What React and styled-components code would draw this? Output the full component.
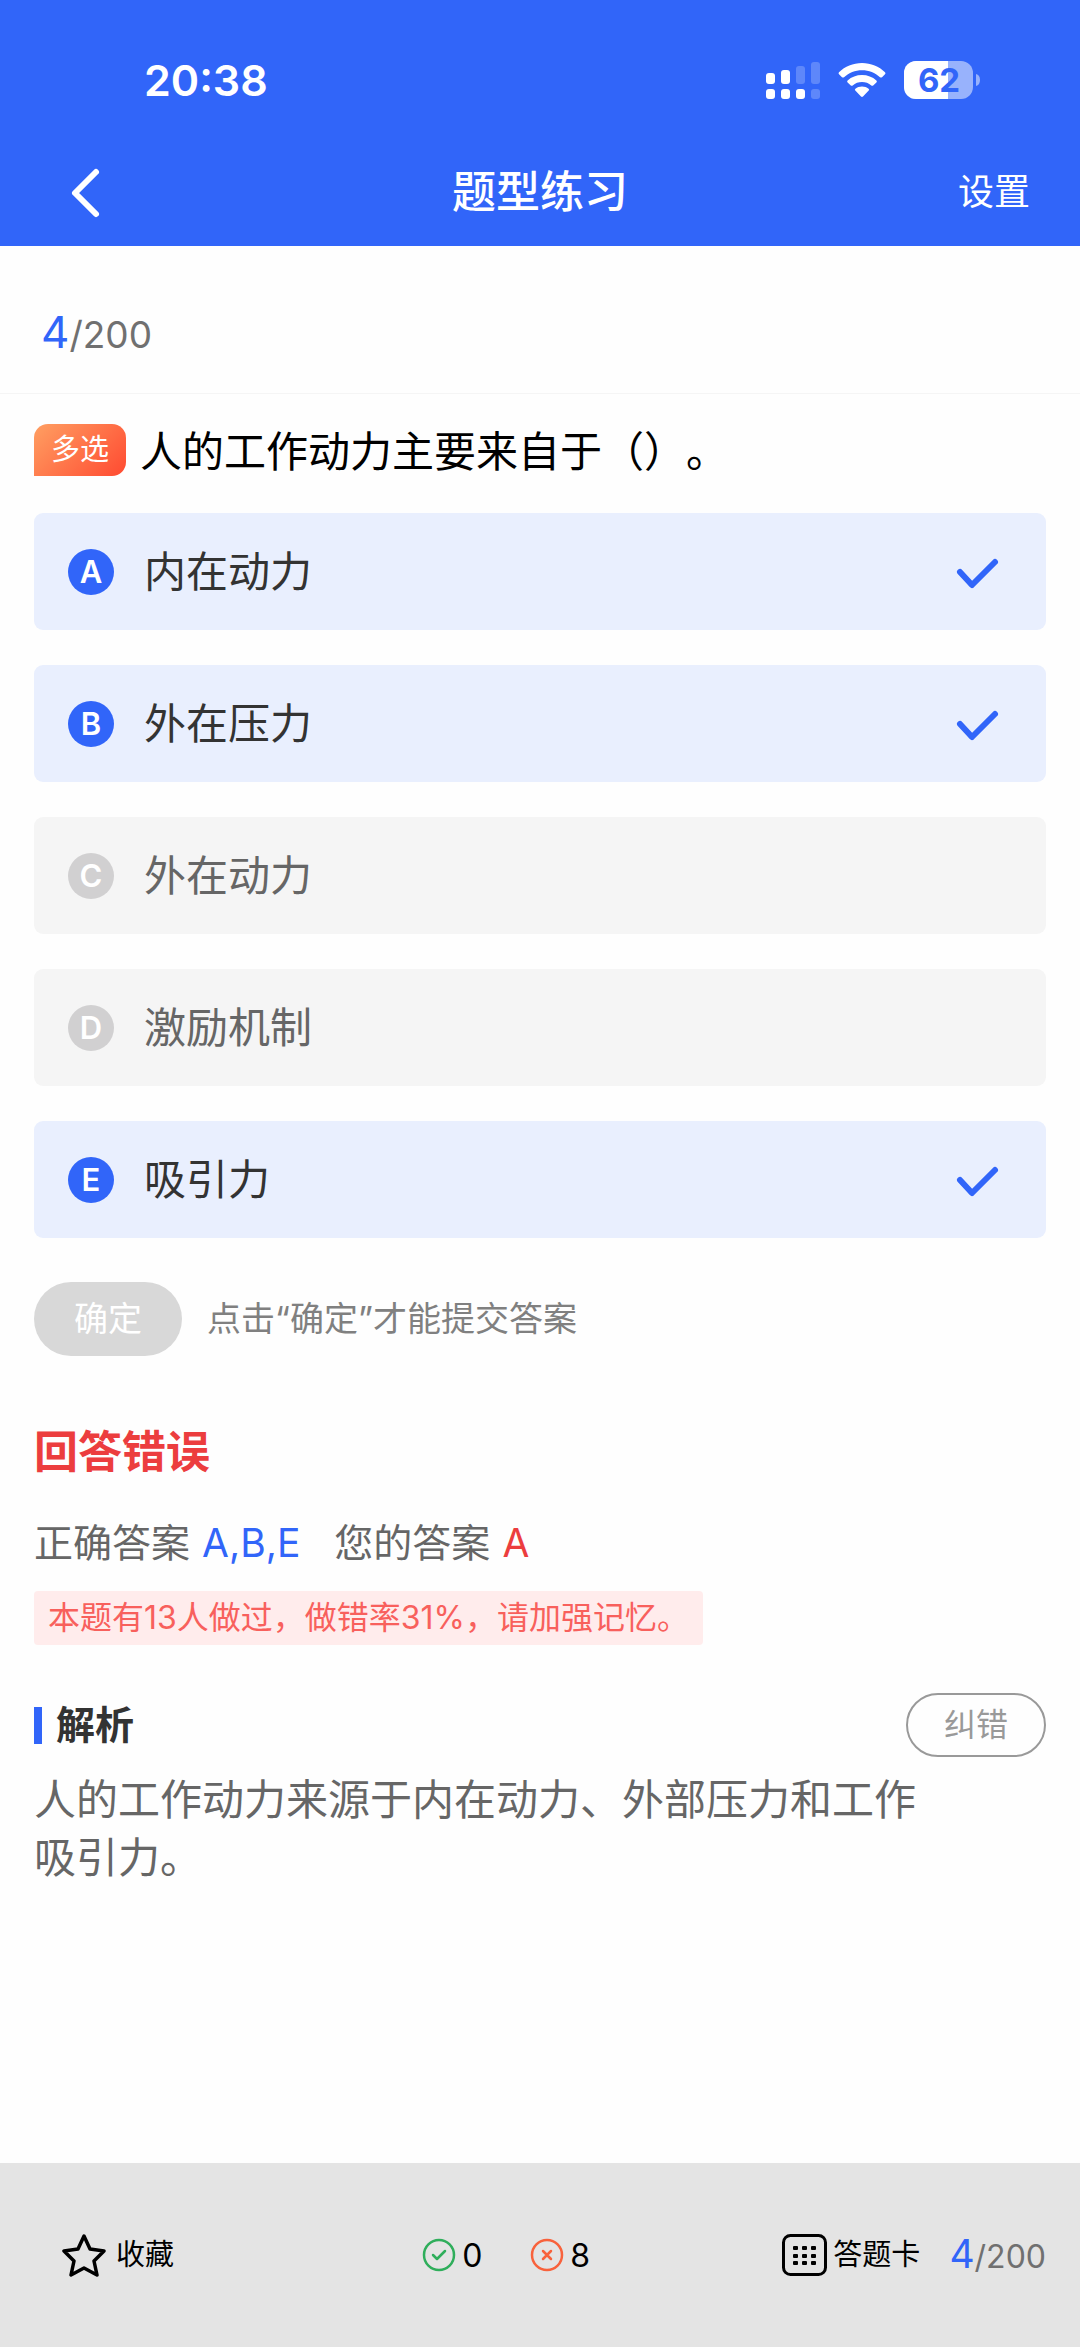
import { useState } from "react";
import styled, { createGlobalStyle } from "styled-components";

const GlobalStyle = createGlobalStyle`
    * {
        box-sizing: border-box;
    }
    body {
        margin: 0;
        background-color: #fefefe;
        font-family: Inter, "Noto Sans CJK SC", sans-serif;
        text-spacing-trim: space-all;
    }
    h1, h2, p {
        margin: 0;
        font-weight: 400;
    }
    button {
        padding: 0;
        border: none;
        background: none;
        font-family: inherit;
        color: inherit;
        cursor: pointer;
    }
    svg {
        display: block;
    }
`

const Page = styled.div`
    display: flex;
    flex-direction: column;
    min-height: 100vh;
`

const Header = styled.header`
    background-color: #3165f9;
    color: white;
`

const StatusBar = styled.div`
    display: flex;
    align-items: center;
    justify-content: space-between;
    height: 138px;
    padding: 22px 100px 0 144px;
`

const Clock = styled.time`
    font-size: 43px;
    font-weight: 600;
`

const StatusIcons = styled.div`
    display: flex;
    align-items: center;
    gap: 18px;
`

const NavBar = styled.nav`
    display: grid;
    grid-template-columns: 1fr auto 1fr;
    align-items: center;
    height: 108px;
    padding: 0 50px;
`

const BackButton = styled.button`
    justify-self: start;
`

const NavTitle = styled.h1`
    font-size: 44px;
    font-weight: 500;
    line-height: 58px;
`

const SettingsButton = styled.button`
    justify-self: end;
    font-size: 36px;
    line-height: 58px;
`

const ProgressRow = styled.div`
    height: 148px;
    padding: 50px 41px 0;
    border-bottom: 1px solid #f5f5f5;
`

const Progress = styled.p`
    font-size: ${({ $small }) => $small ? '32px' : '37px'};
    line-height: 72px;
    color: #707070;
`

const Current = styled.span`
    font-size: ${({ $small }) => $small ? '39px' : '44px'};
    color: #3165f9;
`

const Main = styled.main`
    flex: 1;
    padding: 30px 34px;
`

const Question = styled.div`
    display: flex;
    align-items: flex-start;
    gap: 14px;
    margin-bottom: 33px;
`

const TypeTag = styled.span`
    flex: none;
    padding: 0 17px;
    border-radius: 14px 14px 14px 0;
    background: linear-gradient(135deg, #ff9f62, #ff4a31);
    color: white;
    font-size: 29px;
    line-height: 52px;
`

const QuestionText = styled.h2`
    font-size: 42px;
    line-height: 56px;
    color: black;
`

const Options = styled.div`
    display: flex;
    flex-direction: column;
    gap: 35px;
`

const Option = styled.label`
    display: grid;
    grid-template-columns: 46px 1fr 46px;
    align-items: center;
    column-gap: 30px;
    min-height: 117px;
    padding: 0 46px 0 34px;
    border-radius: 9px;
    background-color: ${({ $active }) => $active ? '#e9effe' : '#f5f5f5'};
    color: ${({ $active }) => $active ? '#333' : '#666'};
    font-size: 42px;
    line-height: 58px;
    cursor: pointer;
`

const OptionLetter = styled.span`
    border-radius: 50%;
    background-color: ${({ $active }) => $active ? '#3165f9' : '#d1d0d1'};
    color: white;
    font-size: 31px;
    font-weight: 600;
    line-height: 46px;
    text-align: center;
`

const Tick = styled.span`
    display: grid;
    place-items: center;
    & > * {
        grid-area: 1 / 1;
    }
    svg {
        pointer-events: none;
    }
`

const TickInput = styled.input`
    appearance: none;
    width: 46px;
    height: 46px;
    margin: 0;
    cursor: pointer;
`

const SubmitRow = styled.div`
    display: flex;
    align-items: center;
    gap: 25px;
    margin-top: 44px;
    font-size: 34px;
    line-height: 46px;
    color: #808080;
`

const SubmitButton = styled.button`
    width: 148px;
    height: 74px;
    border-radius: 37px;
    background-color: #d8d8d8;
    color: white;
    font-size: 34px;
    line-height: 46px;
`

const Result = styled.h2`
    margin-top: 67px;
    font-size: 44px;
    font-weight: 700;
    line-height: 58px;
    color: #ec3d3e;
`

const Answers = styled.p`
    display: flex;
    gap: 34px;
    margin-top: 33px;
    font-size: 39px;
    line-height: 58px;
    color: #666;
`

const AnswerValue = styled.span`
    margin-left: 12px;
    color: ${({ $wrong }) => $wrong ? '#ec3d3e' : '#3165f9'};
`

const Notice = styled.p`
    width: fit-content;
    margin-top: 19px;
    padding: 0 14px;
    border-radius: 4px;
    background-color: #ffecec;
    color: #f8605c;
    font-size: 32px;
    line-height: 54px;
`

const AnalysisHead = styled.div`
    display: flex;
    align-items: center;
    justify-content: space-between;
    margin-top: 48px;
`

const AnalysisTitle = styled.h2`
    display: flex;
    align-items: center;
    gap: 14px;
    font-size: 39px;
    font-weight: 700;
    line-height: 58px;
    color: #333;
    &::before {
        content: "";
        width: 8px;
        height: 37px;
        background-color: #3165f9;
    }
`

const ReportButton = styled.button`
    width: 140px;
    height: 64px;
    border: 2px solid #999;
    border-radius: 32px;
    color: #999;
    font-size: 32px;
    line-height: 46px;
`

const Analysis = styled.p`
    margin-top: 14px;
    padding-right: 110px;
    font-size: 42px;
    line-height: 58px;
    color: #666;
`

const Footer = styled.footer`
    display: grid;
    grid-template-columns: 1fr 1fr auto;
    align-items: center;
    height: 184px;
    padding: 0 34px 0 62px;
    background-color: #e4e4e4;
`

const FooterButton = styled.button`
    display: flex;
    align-items: center;
    justify-self: start;
    gap: ${({ $gap }) => $gap}px;
    font-size: 29px;
    line-height: 58px;
`

const Counts = styled.div`
    display: flex;
    gap: 48px;
`

const Count = styled.span`
    display: flex;
    align-items: center;
    gap: 6px;
    font-size: 32px;
`

const FooterRight = styled.div`
    display: flex;
    align-items: center;
    gap: 29px;
`

const SignalIcon = () => (
    <svg width="54" height="38" viewBox="0 0 54 38" fill="white">
        <rect x="0" y="12" width="9" height="11" rx="3" />
        <rect x="15" y="9" width="9" height="14" rx="3" />
        <g opacity="0.22">
            <rect x="30" y="5" width="9" height="18" rx="3" />
            <rect x="45" y="1" width="9" height="22" rx="3" />
            <rect x="45" y="28" width="9" height="10" rx="3" />
        </g>
        <rect x="0" y="28" width="9" height="10" rx="3" />
        <rect x="15" y="28" width="9" height="10" rx="3" />
        <rect x="30" y="28" width="9" height="10" rx="3" />
    </svg>
)

const WifiIcon = () => (
    <svg width="48" height="36" viewBox="0 0 48 36" fill="white">
        <path d="M24 1C15 1 7 4.500 1 10.200Q0 11.300 1 12.300L4 15.200Q5 16 6 15.200C11 10.800 17 8.200 24 8.200S37 10.800 42 15.200Q43 16 44 15.200L47 12.300Q48 11.300 47 10.200C41 4.500 33 1 24 1Z" />
        <path d="M24 13C18.500 13 13.500 15 9.600 18.400Q8.600 19.400 9.600 20.400L12.800 23.400Q13.700 24.200 14.700 23.400C17.300 21.300 20.500 20.100 24 20.100S30.700 21.300 33.300 23.400Q34.300 24.200 35.200 23.400L38.400 20.400Q39.400 19.400 38.400 18.400C34.500 15 29.500 13 24 13Z" />
        <path d="M24 24.600C21.500 24.600 19.300 25.400 17.400 26.700Q16.300 27.600 17.300 28.600L23 34.500Q24 35.400 25 34.500L30.700 28.600Q31.700 27.600 30.600 26.700C28.700 25.400 26.500 24.600 24 24.600Z" />
    </svg>
)

const BatteryIcon = () => (
    <svg width="76" height="38" viewBox="0 0 76 38">
        <clipPath id="level">
            <rect width="44" height="38" />
        </clipPath>
        <rect width="69" height="38" rx="12" fill="white" opacity="0.5" />
        <rect width="69" height="38" rx="12" fill="white" clipPath="url(#level)" />
        <path d="M72 13Q76 14 76 19T72 25Z" fill="white" opacity="0.5" />
        <text x="35" y="31" textAnchor="middle" fill="#3165f9" fontSize="33" fontWeight="700">62</text>
    </svg>
)

const BackIcon = () => (
    <svg width="58" height="58" viewBox="0 0 58 58" fill="none" stroke="white" strokeWidth="6" strokeLinecap="round" strokeLinejoin="round">
        <path d="M46 9L25 30L46 51" />
    </svg>
)

const TickIcon = () => (
    <svg width="46" height="36" viewBox="0 0 46 36" fill="none" stroke="#3165f9" strokeWidth="6" strokeLinecap="round" strokeLinejoin="round">
        <path d="M6 18L18 31L41 8" />
    </svg>
)

const StarIcon = () => (
    <svg width="44" height="44" viewBox="0 0 44 44" fill="none" stroke="black" strokeWidth="3.500" strokeLinejoin="round">
        <path d="M22 3L28 16L42 18L32 28L35 42L22 35L9 42L12 28L2 18L16 16Z" />
    </svg>
)

const RightIcon = () => (
    <svg width="34" height="34" viewBox="0 0 34 34" fill="none" stroke="#2fae5b" strokeWidth="2.500" strokeLinecap="round" strokeLinejoin="round">
        <circle cx="17" cy="17" r="15" />
        <path d="M11 17L15 21L23 13" />
    </svg>
)

const WrongIcon = () => (
    <svg width="34" height="34" viewBox="0 0 34 34" fill="none" stroke="#f8623c" strokeWidth="2.500" strokeLinecap="round">
        <circle cx="17" cy="17" r="15" />
        <path d="M13 13L21 21M21 13L13 21" />
    </svg>
)

const CardIcon = () => (
    <svg width="45" height="42" viewBox="0 0 45 42">
        <rect x="1.500" y="1.500" width="42" height="39" rx="7" fill="none" stroke="black" strokeWidth="3" />
        {[12, 20, 27].map(y => [11, 20, 29].map(x => (
            <rect key={`${x}-${y}`} x={x} y={y} width="5" height="4" rx="1" />
        )))}
    </svg>
)

const options = [
    { letter: 'A', text: '内在动力' },
    { letter: 'B', text: '外在压力' },
    { letter: 'C', text: '外在动力' },
    { letter: 'D', text: '激励机制' },
    { letter: 'E', text: '吸引力' },
]

const App = () => {

    const [selected, setSelected] = useState(['A', 'B', 'E']);

    const toggle = (letter) => {
        setSelected(selected.includes(letter)
            ? selected.filter(l => l !== letter)
            : [...selected, letter]);
    }

    return (
        <Page>
            <GlobalStyle />
            <Header>
                <StatusBar>
                    <Clock>20:38</Clock>
                    <StatusIcons>
                        <SignalIcon />
                        <WifiIcon />
                        <BatteryIcon />
                    </StatusIcons>
                </StatusBar>
                <NavBar>
                    <BackButton aria-label="返回"><BackIcon /></BackButton>
                    <NavTitle>题型练习</NavTitle>
                    <SettingsButton>设置</SettingsButton>
                </NavBar>
            </Header>
            <ProgressRow>
                <Progress><Current>4</Current>/200</Progress>
            </ProgressRow>
            <Main>
                <Question>
                    <TypeTag>多选</TypeTag>
                    <QuestionText>人的工作动力主要来自于（）。</QuestionText>
                </Question>
                <Options>
                    {options.map(({ letter, text }) => {
                        const active = selected.includes(letter);
                        return (
                            <Option key={letter} $active={active}>
                                <OptionLetter $active={active}>{letter}</OptionLetter>
                                <span>{text}</span>
                                <Tick>
                                    <TickInput type="checkbox" checked={active} onChange={() => toggle(letter)} />
                                    {active && <TickIcon />}
                                </Tick>
                            </Option>
                        );
                    })}
                </Options>
                <SubmitRow>
                    <SubmitButton>确定</SubmitButton>
                    <span>点击“确定”才能提交答案</span>
                </SubmitRow>
                <Result>回答错误</Result>
                <Answers>
                    <span>正确答案<AnswerValue>A,B,E</AnswerValue></span>
                    <span>您的答案<AnswerValue $wrong>A</AnswerValue></span>
                </Answers>
                <Notice>本题有13人做过，做错率31%，请加强记忆。</Notice>
                <AnalysisHead>
                    <AnalysisTitle>解析</AnalysisTitle>
                    <ReportButton>纠错</ReportButton>
                </AnalysisHead>
                <Analysis>人的工作动力来源于内在动力、外部压力和工作吸引力。</Analysis>
            </Main>
            <Footer>
                <FooterButton $gap={10}><StarIcon />收藏</FooterButton>
                <Counts>
                    <Count><RightIcon />0</Count>
                    <Count><WrongIcon />8</Count>
                </Counts>
                <FooterRight>
                    <FooterButton $gap={6}><CardIcon />答题卡</FooterButton>
                    <Progress $small><Current $small>4</Current>/200</Progress>
                </FooterRight>
            </Footer>
        </Page>
    );
}

export default App;
